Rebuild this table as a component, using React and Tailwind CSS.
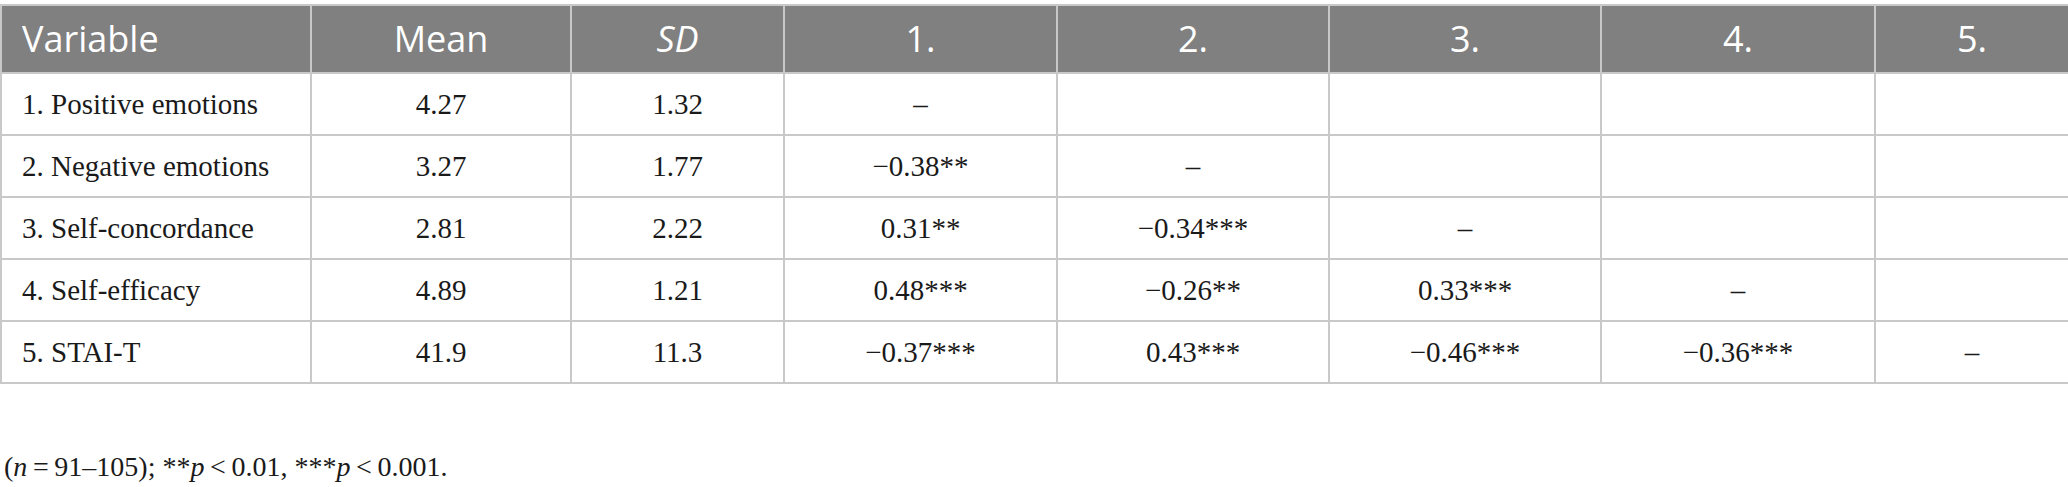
import React from "react";

const colClasses = [
  "w-[310px]",
  "w-[260px]",
  "w-[213px]",
  "w-[273px]",
  "w-[272px]",
  "w-[272px]",
  "w-[274px]",
  "w-[194px]",
];

const rows = [
  ["1. Positive emotions", "4.27", "1.32", "–", "", "", "", ""],
  ["2. Negative emotions", "3.27", "1.77", "−0.38**", "–", "", "", ""],
  ["3. Self-concordance", "2.81", "2.22", "0.31**", "−0.34***", "–", "", ""],
  ["4. Self-efficacy", "4.89", "1.21", "0.48***", "−0.26**", "0.33***", "–", ""],
  ["5. STAI-T", "41.9", "11.3", "−0.37***", "0.43***", "−0.46***", "−0.36***", "–"],
];

const headers = ["Variable", "Mean", "SD", "1.", "2.", "3.", "4.", "5."];

export default function App() {
  return (
    <div className="w-[2068px] h-[487px] bg-white pt-[4px] overflow-hidden">
      <table className="table-fixed border-collapse w-[2068px]">
        <colgroup>
          {colClasses.map((c, i) => (
            <col key={i} className={c} />
          ))}
        </colgroup>
        <thead>
          <tr className="bg-[#808080] h-[68px]">
            {headers.map((h, i) => (
              <th
                key={i}
                className={
                  "border-2 border-[#c8c8c8] font-normal text-white text-[36px] leading-none p-0 " +
                  (i === 0 ? "text-left pl-[20px]" : "text-center") +
                  (i === 2 ? " italic" : "")
                }
                style={{ fontFamily: '"Open Sans", "Liberation Sans", sans-serif' }}
              >
                {h}
              </th>
            ))}
          </tr>
        </thead>
        <tbody>
          {rows.map((r, ri) => (
            <tr key={ri} className="h-[62px]">
              {r.map((cell, ci) => (
                <td
                  key={ci}
                  className={
                    "border-2 border-[#c8c8c8] text-[29px] leading-none text-[#1a1a1a] p-0 " +
                    (ci === 0 ? "text-left pl-[20px]" : "text-center")
                  }
                  style={{ fontFamily: '"Liberation Serif", "Times New Roman", serif' }}
                >
                  {cell}
                </td>
              ))}
            </tr>
          ))}
        </tbody>
      </table>
      <p
        className="mt-[69px] pl-[4px] text-[28px] text-[#1a1a1a] leading-none"
        style={{ fontFamily: '"Liberation Serif", "Times New Roman", serif' }}
      >
        (<i>n</i>{"\u2009=\u2009"}91–105); **<i>p</i>{"\u2009<\u2009"}0.01, ***<i>p</i>{"\u2009<\u2009"}0.001.
      </p>
    </div>
  );
}
